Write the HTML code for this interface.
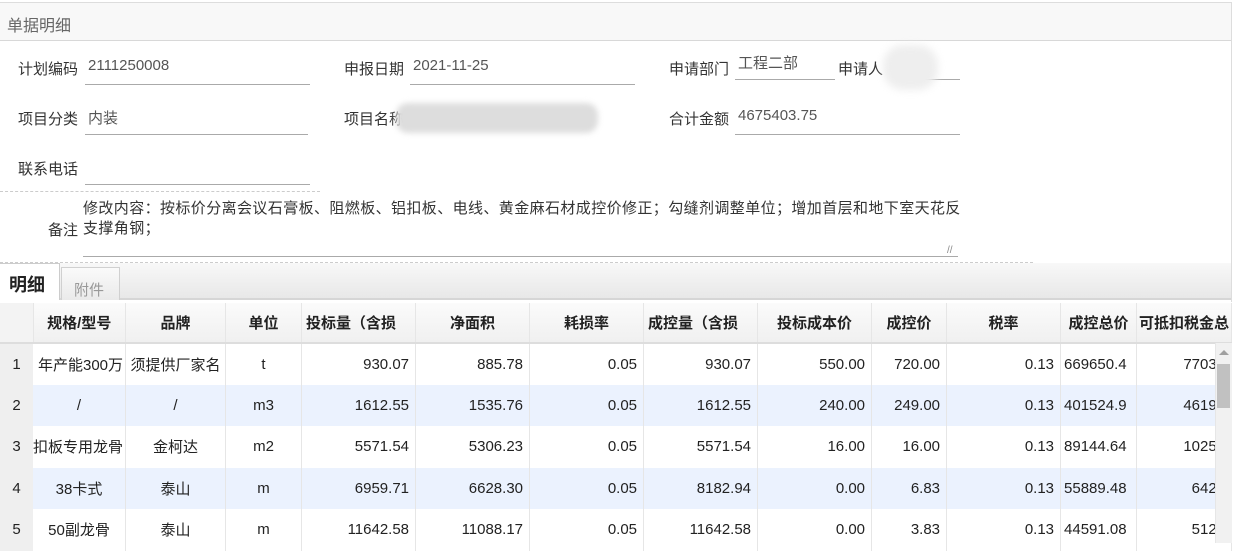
<!DOCTYPE html>
<html><head><meta charset="utf-8"><style>
*{margin:0;padding:0;box-sizing:border-box}
body{width:1234px;height:543px;overflow:hidden;background:#fff;font-family:"Liberation Sans","Noto Sans CJK SC",sans-serif;font-size:15px;color:#333;position:relative}
.a{position:absolute}
.lbl{position:absolute;color:#333;font-size:15px}
.val{position:absolute;color:#555;font-size:15px}
.ul{position:absolute;height:1px;background:#aaa}
table{border-collapse:collapse;table-layout:fixed;position:absolute;left:0;top:303px}
td,th{border-right:1px solid #e6e6e6;height:41.5px;font-size:15px;color:#222;white-space:nowrap;overflow:hidden;padding:0 6px}
th{font-weight:bold;background:linear-gradient(#fbfbfb,#f0f0f0);border-bottom:2px solid #ddd;height:40px;text-align:center}
td{text-align:right}
td.c{text-align:center}
td.n{background:#efefef;text-align:center;padding:0;border-right:none}
tr.alt td{background:#ebf2fe}
tr.alt td.n{background:#efefef}
</style></head><body>
<div class="a" style="left:0;top:2px;width:1232px;height:1px;background:#ddd"></div>
<div class="a" style="left:0;top:3px;width:1232px;height:38px;background:#f8f8f8;border-bottom:1px solid #d8d8d8"></div>
<div class="a" style="left:1231px;top:2px;width:1px;height:300px;background:#ddd"></div>
<div class="a" style="left:7px;top:12px;font-size:16px;color:#666">单据明细</div>

<div class="lbl" style="left:18px;top:58px">计划编码</div><div class="val" style="left:88px;top:57px">2111250008</div><div class="ul" style="left:85px;top:84px;width:225px"></div>
<div class="lbl" style="left:344px;top:58px">申报日期</div><div class="val" style="left:413px;top:57px">2021-11-25</div><div class="ul" style="left:410px;top:84px;width:225px"></div>
<div class="lbl" style="left:669px;top:58px">申请部门</div><div class="val" style="left:738px;top:52px">工程二部</div><div class="ul" style="left:735px;top:79px;width:100px"></div>
<div class="lbl" style="left:838px;top:58px">申请人</div><div class="ul" style="left:925px;top:79px;width:35px"></div>
<div class="a" style="left:883px;top:45px;width:55px;height:45px;background:#eee;border-radius:20px;filter:blur(4px)"></div>

<div class="lbl" style="left:18px;top:108px">项目分类</div><div class="val" style="left:88px;top:107px">内装</div><div class="ul" style="left:85px;top:134px;width:223px"></div>
<div class="lbl" style="left:344px;top:108px">项目名称</div>
<div class="a" style="left:396px;top:103px;width:202px;height:30px;background:#ddd;border-radius:12px;filter:blur(3px)"></div>
<div class="lbl" style="left:669px;top:108px">合计金额</div><div class="val" style="left:738px;top:107px">4675403.75</div><div class="ul" style="left:735px;top:134px;width:225px"></div>

<div class="lbl" style="left:18px;top:158px">联系电话</div><div class="ul" style="left:85px;top:184px;width:225px"></div>
<div class="a" style="left:0;top:191px;width:320px;border-top:1px dashed #ccc"></div>
<div class="lbl" style="left:83px;top:199px;width:880px;line-height:20px;letter-spacing:0.4px">修改内容：按标价分离会议石膏板、阻燃板、铝扣板、电线、黄金麻石材成控价修正；勾缝剂调整单位；增加首层和地下室天花反支撑角钢；</div>
<div class="lbl" style="left:48px;top:219px">备注</div>
<div class="ul" style="left:83px;top:256px;width:875px"></div>
<div class="a" style="left:947px;top:245px;color:#888;font-size:10px">//</div>
<div class="a" style="left:0;top:262px;width:1033px;border-top:1px dashed #ccc"></div>

<div class="a" style="left:0;top:263px;width:1231px;height:37px;background:linear-gradient(#f8f8f8,#e8e8e8);border-bottom:2px solid #d6d6d6"></div>
<div class="a" style="left:0;top:263px;width:60px;height:37px;background:#fff;border:1px solid #ccc;border-bottom:none;border-left:none"></div>
<div class="a" style="left:9px;top:271px;font-size:18px;font-weight:bold;color:#222">明细</div>
<div class="a" style="left:61px;top:267px;width:59px;height:33px;background:linear-gradient(#fafafa,#eaeaea);border:1px solid #d0d0d0;border-bottom:none"></div>
<div class="a" style="left:74px;top:279px;color:#999;font-size:15px">附件</div>

<table>
<colgroup><col style="width:33px"><col style="width:92px"><col style="width:100px"><col style="width:76px"><col style="width:114px"><col style="width:114px"><col style="width:114px"><col style="width:114px"><col style="width:114px"><col style="width:75px"><col style="width:114px"><col style="width:76px"><col style="width:90px"></colgroup>
<tr><th style="background:#f3f3f3"></th><th>规格/型号</th><th>品牌</th><th>单位</th><th style="padding:0 4px;text-align:left">投标量（含损</th><th>净面积</th><th>耗损率</th><th style="padding:0 4px;text-align:left">成控量（含损</th><th>投标成本价</th><th>成控价</th><th>税率</th><th style="padding:0 4px">成控总价</th><th style="text-align:left;padding:0 2px">可抵扣税金总</th></tr>
<tr><td class="n">1</td><td style="padding:0 2px 0 0;text-align:right">年产能300万</td><td class="c" style="padding:0">须提供厂家名</td><td class="c">t</td><td>930.07</td><td>885.78</td><td>0.05</td><td>930.07</td><td>550.00</td><td>720.00</td><td>0.13</td><td style="text-align:left;padding:0 3px">669650.4</td><td style="padding-right:6px">77039</td></tr>
<tr class="alt"><td class="n">2</td><td class="c">/</td><td class="c">/</td><td class="c">m3</td><td>1612.55</td><td>1535.76</td><td>0.05</td><td>1612.55</td><td>240.00</td><td>249.00</td><td>0.13</td><td style="text-align:left;padding:0 3px">401524.9</td><td style="padding-right:6px">46193</td></tr>
<tr><td class="n">3</td><td style="padding:0 2px 0 0;text-align:right">扣板专用龙骨</td><td class="c">金柯达</td><td class="c">m2</td><td>5571.54</td><td>5306.23</td><td>0.05</td><td>5571.54</td><td>16.00</td><td>16.00</td><td>0.13</td><td style="text-align:left;padding:0 3px">89144.64</td><td style="padding-right:6px">10255</td></tr>
<tr class="alt"><td class="n">4</td><td class="c">38卡式</td><td class="c">泰山</td><td class="c">m</td><td>6959.71</td><td>6628.30</td><td>0.05</td><td>8182.94</td><td>0.00</td><td>6.83</td><td>0.13</td><td style="text-align:left;padding:0 3px">55889.48</td><td style="padding-right:6px">6429</td></tr>
<tr><td class="n">5</td><td class="c">50副龙骨</td><td class="c">泰山</td><td class="c">m</td><td>11642.58</td><td>11088.17</td><td>0.05</td><td>11642.58</td><td>0.00</td><td>3.83</td><td>0.13</td><td style="text-align:left;padding:0 3px">44591.08</td><td style="padding-right:6px">5129</td></tr>
</table>
<div class="a" style="left:1215px;top:343px;width:17px;height:200px;background:#f1f1f1;border-left:1px solid #e6e6e6"></div>
<div class="a" style="left:1219px;top:350px;width:0;height:0;border-left:5px solid transparent;border-right:5px solid transparent;border-bottom:5px solid #a0a0a0"></div>
<div class="a" style="left:1217px;top:364px;width:13px;height:44px;background:#c1c1c1"></div>
</body></html>
